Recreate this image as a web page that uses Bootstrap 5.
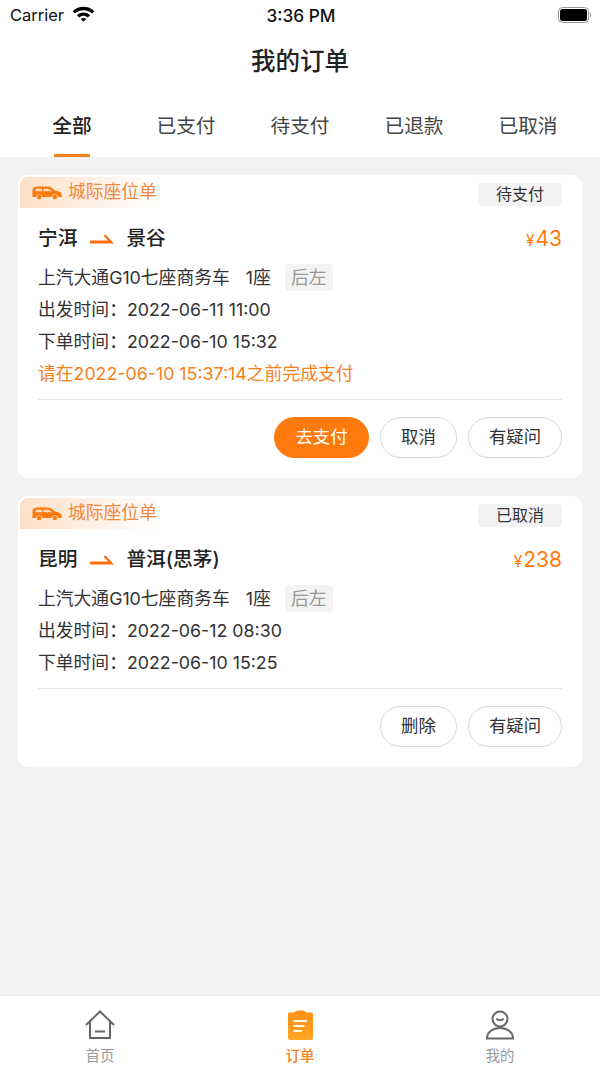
<!DOCTYPE html>
<html lang="zh-CN">
<head>
  <meta charset="UTF-8" />
  <meta name="viewport" content="width=device-width, initial-scale=1.0"/>
  <title>我的订单</title>
  <link href="https://cdn.jsdelivr.net/npm/bootstrap@5.3.3/dist/css/bootstrap.min.css" rel="stylesheet">
  <style>
    html, body {
      height: 100%;
      margin: 0;
      overflow: hidden;
    }
    body {
      font-family: Inter, "Noto Sans CJK SC", sans-serif;
      color: #222;
      background: #f2f2f2;
    }
    .app-shell { height: 1067px; }
    .status-row {
      height: 31px;
      padding: 0 8px 0 10px;
      font-size: 16.5px;
      color: #111;
      background: #fff;
    }
    .status-side { width: 180px; }
    .status-time { font-weight: 500; font-size: 17.2px; }
    .page-title {
      height: 60px;
      font-size: 24.5px;
      font-weight: 500;
      line-height: 60px;
      background: #fff;
    }
    .tab-row {
      height: 66px;
      background: #fff;
      padding: 0 15px;
    }
    .tab-item {
      flex: 1 1 0;
      text-align: center;
      font-size: 19.7px;
      line-height: 26px;
      padding-top: 22px;
      color: #444;
      position: relative;
    }
    .tab-item.on { color: #222; font-weight: 500; }
    .tab-item.on::after {
      content: "";
      position: absolute;
      left: 50%;
      bottom: 0;
      width: 36px;
      height: 3px;
      margin-left: -18px;
      background: #f58220;
    }
    .order-list { padding: 18px 18px 0; gap: 18px; }
    .order-card {
      border: 0;
      border-radius: 10px;
      padding: 2px 20px 20px;
    }
    .kind-tag {
      margin-left: -18px;
      width: 140px;
      height: 31px;
      padding-left: 12px;
      gap: 6px;
      font-size: 17.8px;
      color: #f0883e;
      border-top-left-radius: 8px;
      background: linear-gradient(90deg, #fde0c8, #fff);
    }
    .state-tag {
      width: 84px;
      height: 23px;
      margin-top: 6px;
      font-size: 16px;
      line-height: 23px;
      text-align: center;
      color: #333;
      background: #f3f3f3;
      border-radius: 4px;
    }
    .route-row {
      height: 30px;
      margin-top: 16px;
      font-size: 19.7px;
      font-weight: 500;
      color: #222;
    }
    .route-arrow { margin: 0 12px 0 13px; }
    .price { color: #ff7a0c; font-size: 21px; font-weight: 400; }
    .price small { font-size: 15.5px; margin-right: 1px; }
    .info-row {
      height: 32px;
      font-size: 17.8px;
      line-height: 32px;
      color: #333;
    }
    .info-row.warn { color: #f58220; }
    .info-list { margin-top: 8px; }
    .seat-num { margin-left: 16px; }
    .seat-tag {
      display: inline-block;
      width: 48px;
      height: 27px;
      margin-left: 14px;
      line-height: 27px;
      text-align: center;
      color: #999;
      background: #f3f3f3;
      border-radius: 4px;
    }
    .split-line { height: 1px; background: #e8e8e8; margin-top: 9px; }
    .act-row { margin-top: 17px; gap: 11px; }
    .act-btn {
      height: 41px;
      padding: 0 0 2px;
      font-size: 17.4px;
      line-height: 37px;
      color: #333;
      background: #fff;
      border: 1px solid #d9d9d9;
      border-radius: 21px;
    }
    .act-two { width: 77px; }
    .act-three { width: 94px; }
    .act-btn.go { width: 95px; color: #fff; background: #ff7a0c; border-color: #ff7a0c; }
    .foot-bar {
      height: 72px;
      background: #fff;
      border-top: 1px solid #ececec;
    }
    .foot-item {
      width: 200px;
      font-size: 14.5px;
      line-height: 18px;
      color: #999;
      padding-top: 14px;
    }
    .foot-item.on { color: #f58220; font-weight: 500; }
    .foot-item svg { display: block; margin-bottom: 7px; }
  </style>
</head>
<body>
<div class="app-shell d-flex flex-column">

  <div class="status-row d-flex align-items-center justify-content-between">
    <div class="status-side d-flex align-items-center gap-2">
      <span>Carrier</span>
      <svg class="mb-1" width="23" height="17" viewBox="0 0 24 18">
        <path d="M.5 6.500C7 .3 17 .3 23.500 6.500L21 9C15.800 4.300 8.200 4.300 3 9Z" fill="#000"/>
        <path d="M5 10.800C9.200 7 14.800 7 19 10.800L16.500 13.200C13.800 10.800 10.200 10.800 7.500 13.200Z" fill="#000"/>
        <path d="M9 14.800C10.800 13.400 13.200 13.400 15 14.800L12 17.800Z" fill="#000"/>
      </svg>
    </div>
    <div class="status-time">3:36 PM</div>
    <div class="status-side d-flex justify-content-end">
      <svg width="34" height="17" viewBox="0 0 34 17">
        <rect x=".5" y=".5" width="30" height="15" rx="4" fill="none" stroke="#999"/>
        <rect x="2" y="2" width="27" height="12" rx="2.5" fill="#000"/>
        <path d="M32 5.500C33.500 6 33.500 10 32 10.500Z" fill="#999"/>
      </svg>
    </div>
  </div>

  <div class="page-title text-center">我的订单</div>

  <div class="tab-row d-flex">
    <div class="tab-item on">全部</div>
    <div class="tab-item">已支付</div>
    <div class="tab-item">待支付</div>
    <div class="tab-item">已退款</div>
    <div class="tab-item">已取消</div>
  </div>

  <div class="order-list d-flex flex-column flex-grow-1">

    <div class="card order-card">
      <div class="d-flex justify-content-between align-items-start">
        <div class="kind-tag d-flex align-items-center">
          <svg width="30" height="14" viewBox="0 0 30 14"><path d="M.500 11V5C.500 2 2.500 .5 5 .5H16C18.500 .5 21 2.500 23 4.500L27 5.500C29 6 29.800 8 29.800 11H26A3.300 3.300 0 0 0 19.500 11H10.500A3.300 3.300 0 0 0 4 11Z" fill="#ff7a0c"/><circle cx="7.200" cy="11" r="2.300" fill="#ff7a0c"/><circle cx="22.800" cy="11" r="2.300" fill="#ff7a0c"/><path d="M4.500 2.800H10V5.300H3.200ZM11.500 2.800H16.500L20 5.300H11.500Z" fill="#fde0c8"/></svg>
          <span>城际座位单</span>
        </div>
        <div class="state-tag">待支付</div>
      </div>
      <div class="route-row d-flex align-items-center">
        <span>宁洱</span>
        <svg class="route-arrow" width="24" height="10" viewBox="0 0 24 10"><path d="M0 6.500H18L13.500 1.500L15.500 .5L24 9.500H0Z" fill="#ff6f0f"/></svg>
        <span>景谷</span>
        <span class="price ms-auto"><small>¥</small>43</span>
      </div>
      <div class="info-list">
        <div class="info-row">上汽大通G10七座商务车<span class="seat-num">1座</span><span class="seat-tag">后左</span></div>
        <div class="info-row">出发时间：2022-06-11 11:00</div>
        <div class="info-row">下单时间：2022-06-10 15:32</div>
        <div class="info-row warn">请在2022-06-10 15:37:14之前完成支付</div>
      </div>
      <div class="split-line"></div>
      <div class="act-row d-flex justify-content-end">
        <button class="btn act-btn go">去支付</button>
        <button class="btn act-btn act-two">取消</button>
        <button class="btn act-btn act-three">有疑问</button>
      </div>
    </div>

    <div class="card order-card">
      <div class="d-flex justify-content-between align-items-start">
        <div class="kind-tag d-flex align-items-center">
          <svg width="30" height="14" viewBox="0 0 30 14"><path d="M.500 11V5C.500 2 2.500 .5 5 .5H16C18.500 .5 21 2.500 23 4.500L27 5.500C29 6 29.800 8 29.800 11H26A3.300 3.300 0 0 0 19.500 11H10.500A3.300 3.300 0 0 0 4 11Z" fill="#ff7a0c"/><circle cx="7.200" cy="11" r="2.300" fill="#ff7a0c"/><circle cx="22.800" cy="11" r="2.300" fill="#ff7a0c"/><path d="M4.500 2.800H10V5.300H3.200ZM11.500 2.800H16.500L20 5.300H11.500Z" fill="#fde0c8"/></svg>
          <span>城际座位单</span>
        </div>
        <div class="state-tag">已取消</div>
      </div>
      <div class="route-row d-flex align-items-center">
        <span>昆明</span>
        <svg class="route-arrow" width="24" height="10" viewBox="0 0 24 10"><path d="M0 6.500H18L13.500 1.500L15.500 .5L24 9.500H0Z" fill="#ff6f0f"/></svg>
        <span>普洱(思茅)</span>
        <span class="price ms-auto"><small>¥</small>238</span>
      </div>
      <div class="info-list">
        <div class="info-row">上汽大通G10七座商务车<span class="seat-num">1座</span><span class="seat-tag">后左</span></div>
        <div class="info-row">出发时间：2022-06-12 08:30</div>
        <div class="info-row">下单时间：2022-06-10 15:25</div>
      </div>
      <div class="split-line"></div>
      <div class="act-row d-flex justify-content-end">
        <button class="btn act-btn act-two">删除</button>
        <button class="btn act-btn act-three">有疑问</button>
      </div>
    </div>

  </div>

  <div class="foot-bar d-flex">
    <div class="foot-item d-flex flex-column align-items-center">
      <svg width="30" height="30" viewBox="0 0 30 30" fill="none" stroke="#666" stroke-width="2"><path d="M1 15L15 1.500L29 15"/><path d="M5 11.500V28H25V11.500"/><path d="M10 21.500H20"/></svg>
      首页
    </div>
    <div class="foot-item on d-flex flex-column align-items-center">
      <svg width="30" height="30" viewBox="0 0 30 30"><defs><linearGradient id="clipGrad" x1="0" y1="0" x2="0" y2="1"><stop offset="0" stop-color="#ff8f14"/><stop offset="1" stop-color="#ffa626"/></linearGradient></defs><path d="M3 4C3 3 4 2.500 5 2.500H9.500C10.500 1 12 .5 15.500 .5C19 .5 20.500 1 21.500 2.500H26C27 2.500 28 3 28 4V28C28 29 27 30 26 30H5C4 30 3 29 3 28Z" fill="url(#clipGrad)"/><path d="M8.500 11H22M8.500 16H19.500M8.500 21H17" stroke="#fff" stroke-width="2" opacity=".9"/></svg>
      订单
    </div>
    <div class="foot-item d-flex flex-column align-items-center">
      <svg width="30" height="30" viewBox="0 0 30 30" fill="none" stroke="#666" stroke-width="2"><circle cx="15" cy="9" r="7.500"/><path d="M11.500 8.500C13 10.800 17 10.800 18.500 8.500"/><path d="M2 28.500C2 22 8 18 15 18C22 18 28 22 28 28.500Z"/></svg>
      我的
    </div>
  </div>

</div>
<script src="https://cdn.jsdelivr.net/npm/bootstrap@5.3.3/dist/js/bootstrap.bundle.min.js"></script>
</body>
</html>
